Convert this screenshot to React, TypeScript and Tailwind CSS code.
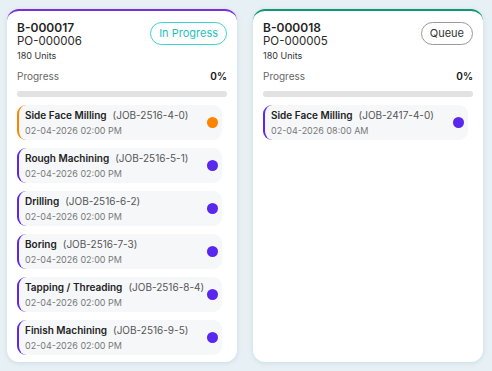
import React from "react";

type Job = {
  name: string;
  code: string;
  time: string;
  color: "orange" | "purple";
};

type Batch = {
  id: string;
  po: string;
  units: string;
  status: "progress" | "queue";
  jobs: Job[];
};

const batches: Batch[] = [
  {
    id: "B-000017",
    po: "PO-000006",
    units: "180 Units",
    status: "progress",
    jobs: [
      { name: "Side Face Milling", code: "(JOB-2516-4-0)", time: "02-04-2026 02:00 PM", color: "orange" },
      { name: "Rough Machining", code: "(JOB-2516-5-1)", time: "02-04-2026 02:00 PM", color: "purple" },
      { name: "Drilling", code: "(JOB-2516-6-2)", time: "02-04-2026 02:00 PM", color: "purple" },
      { name: "Boring", code: "(JOB-2516-7-3)", time: "02-04-2026 02:00 PM", color: "purple" },
      { name: "Tapping / Threading", code: "(JOB-2516-8-4)", time: "02-04-2026 02:00 PM", color: "purple" },
      { name: "Finish Machining", code: "(JOB-2516-9-5)", time: "02-04-2026 02:00 PM", color: "purple" },
    ],
  },
  {
    id: "B-000018",
    po: "PO-000005",
    units: "180 Units",
    status: "queue",
    jobs: [
      { name: "Side Face Milling", code: "(JOB-2417-4-0)", time: "02-04-2026 08:00 AM", color: "purple" },
    ],
  },
];

export default function App() {
  return (
    <div
      className="w-[492px] h-[371px] bg-[#e6f0f5] flex gap-4 px-[7px] pt-[9px] overflow-hidden"
      style={{ fontFamily: "Inter, 'Noto Sans', sans-serif" }}
    >
      {batches.map((b) => (
        <BatchCard key={b.id} batch={b} />
      ))}
    </div>
  );
}

function BatchCard({ batch }: { batch: Batch }) {
  const top = batch.status === "progress" ? "border-t-[#7b2fd6]" : "border-t-[#109775]";
  return (
    <div
      className={`w-[230px] h-[353px] bg-white rounded-[12px] border-t-2 ${top} shadow-[0_1px_4px_rgba(150,180,200,0.35)] flex flex-col overflow-hidden`}
    >
      <div className="px-[10px] pt-[9px]">
        <div className="flex justify-between items-start">
          <div>
            <div className="text-[12px] font-semibold leading-[15px] text-[#1f1f1f]">{batch.id}</div>
            <div className="text-[11.5px] leading-[12px] text-[#2a2a2a]">{batch.po}</div>
            <div className="text-[9px] leading-[11px] mt-[3px] text-[#333]">{batch.units}</div>
          </div>
          {batch.status === "progress" ? (
            <span className="mt-[2px] h-[23px] px-[8px] flex items-center rounded-full border border-[#3dd3cf] text-[#1fbfbd] text-[11px]">
              In Progress
            </span>
          ) : (
            <span className="mt-[2px] h-[23px] px-[8px] flex items-center rounded-full border border-[#9a9a9a] text-[#333] text-[11px]">
              Queue
            </span>
          )}
        </div>
        <div className="flex justify-between items-center mt-[9px] text-[10px] leading-[12px]">
          <span className="text-[#666]">Progress</span>
          <span className="font-semibold text-[#111]">0%</span>
        </div>
        <div className="mt-[9px] h-[6px] rounded-full bg-[#e2e2e2]" />
      </div>
      <div className="flex flex-col gap-[8px] pl-[10px] pr-[15px] mt-[8px]">
        {batch.jobs.map((j) => (
          <JobRow key={j.code} job={j} />
        ))}
      </div>
    </div>
  );
}

function JobRow({ job }: { job: Job }) {
  const edge = job.color === "orange" ? "border-l-[#fb8500]" : "border-l-[#5a27ee]";
  const dot = job.color === "orange" ? "bg-[#fb8500]" : "bg-[#5a27ee]";
  return (
    <div
      className={`shrink-0 h-[35px] rounded-[9px] bg-[#f6f7f9] border-l-2 ${edge} flex items-center justify-between pl-[6px] pr-[4px]`}
    >
      <div>
        <div className="text-[10px] leading-[13px] whitespace-nowrap">
          <span className="font-semibold text-[#222]">{job.name}</span>
          <span className="ml-[6px] text-[#555]">{job.code}</span>
        </div>
        <div className="text-[9px] leading-[12px] text-[#777] mt-[3px]">{job.time}</div>
      </div>
      <span className={`w-[11px] h-[11px] rounded-full ${dot}`} />
    </div>
  );
}
